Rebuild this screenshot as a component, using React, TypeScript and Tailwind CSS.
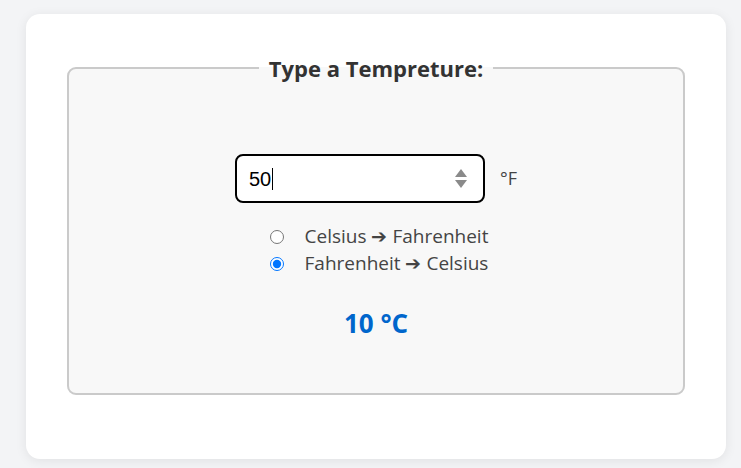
import React from "react";

export default function App() {
  return (
    <div className="w-[741px] h-[468px] bg-[#f3f4f6] overflow-hidden pt-[14px] pl-[26px]" style={{ fontFamily: '"Open Sans", "Noto Sans", sans-serif' }}>
      <div className="w-[700px] h-[445px] bg-white rounded-[14px] shadow-[0_2px_12px_rgba(0,0,0,0.08)] px-[41px] pt-[40px]">
        <fieldset className="border-2 border-[#cacaca] rounded-[9px] bg-[#f8f8f8] h-[341px] w-[618px]">
          <legend className="mx-auto px-[10px] text-[22px] leading-[28px] font-bold text-[#333]">Type a Tempreture:</legend>
          <div className="flex flex-col items-center pt-[72px]">
            <div className="flex items-center gap-[15px]">
              <div className="w-[250px] h-[49px] border-2 border-black rounded-[8px] bg-white flex items-center pl-[12px] pr-[16px]">
                <span className="text-[20px] text-black" style={{ fontFamily: '"Liberation Sans", Arial, sans-serif' }}>50</span>
                <span className="w-[1px] h-[22px] bg-black ml-[1px]" />
                <div className="ml-auto flex flex-col items-center gap-[3px] w-[12px]">
                  <div className="w-0 h-0 border-l-[6px] border-r-[6px] border-b-[8px] border-l-transparent border-r-transparent border-b-[#8a8a8a]" />
                  <div className="w-0 h-0 border-l-[6px] border-r-[6px] border-t-[8px] border-l-transparent border-r-transparent border-t-[#8a8a8a]" />
                </div>
              </div>
              <span className="text-[18px] text-[#444]">°F</span>
            </div>
            <div className="flex flex-col mt-[20px] ml-[6px]">
              <label className="flex items-center h-[27px] text-[19px] text-[#444]">
                <input type="radio" name="mode" readOnly className="m-0 w-[14px] h-[14px] mr-[21px]" />
                Celsius ➔ Fahrenheit
              </label>
              <label className="flex items-center h-[27px] text-[19px] text-[#444]">
                <input type="radio" name="mode" readOnly checked className="m-0 w-[14px] h-[14px] mr-[21px]" />
                Fahrenheit ➔ Celsius
              </label>
            </div>
            <div className="mt-[30px] text-[26px] leading-[32px] font-bold text-[#0066cc]">10 °C</div>
          </div>
        </fieldset>
      </div>
    </div>
  );
}
